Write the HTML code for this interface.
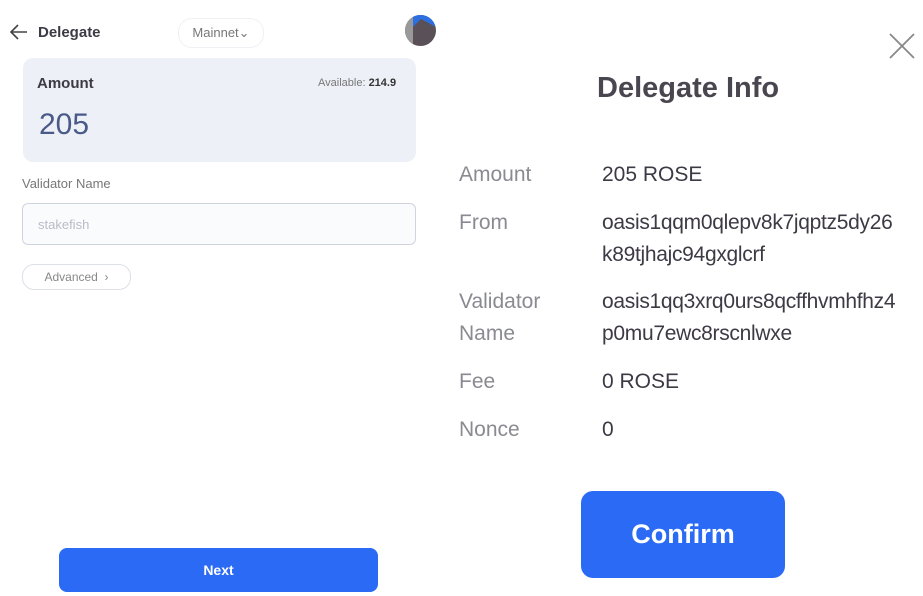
<!DOCTYPE html>
<html><head><meta charset="utf-8"><style>
body{margin:0;width:923px;height:596px;background:#fff;font-family:"Liberation Sans",sans-serif;position:relative;overflow:hidden;color:#3d3a45}
.a{position:absolute}
.lbl{color:#8a8a92;font-size:21px}
.val{color:#3d3a45;font-size:21px;line-height:32px}
</style></head><body>
<svg class="a" style="left:10px;top:24px" width="18" height="16" viewBox="0 0 18 16"><path d="M17 8H2M8 1L1 8l7 7" fill="none" stroke="#444" stroke-width="1.6"/></svg>
<div class="a" style="left:38px;top:24px;font-size:15px;font-weight:bold;color:#3d3a45">Delegate</div>
<div class="a" style="left:178px;top:18px;width:84px;height:28px;border-radius:14px;border:1px solid #f0f0f4;font-size:13px;color:#777;line-height:28px;text-align:center">Mainnet⌄</div>
<div class="a" style="left:405px;top:15px;width:31px;height:31px;border-radius:50%;background:#5a5057;overflow:hidden"><div class="a" style="left:0;top:0;width:8px;height:31px;background:#999"></div><svg class="a" style="left:0;top:0" width="31" height="31"><path d="M8 12L16 4L31 12V0H8Z" fill="#2c6fe0"/></svg></div>
<div class="a" style="left:23px;top:58px;width:393px;height:104px;border-radius:10px;background:#edf0f7"></div>
<div class="a" style="left:37px;top:75px;font-size:15px;font-weight:bold">Amount</div>
<div class="a" style="left:318px;top:77px;font-size:11px;color:#777">Available: <b style="color:#333">214.9</b></div>
<div class="a" style="left:39px;top:108px;font-size:30px;color:#4a5a88">205</div>
<div class="a" style="left:22px;top:176px;font-size:13px;color:#777">Validator Name</div>
<div class="a" style="left:22px;top:203px;width:392px;height:40px;border:1px solid #cfd4e0;border-radius:6px;background:#fafbfd"></div>
<div class="a" style="left:38px;top:217px;font-size:13px;color:#b8bcc6">stakefish</div>
<div class="a" style="left:22px;top:264px;width:107px;height:24px;border:1px solid #dde0e8;border-radius:12px;font-size:12px;color:#888;line-height:24px;text-align:center">Advanced &nbsp;›</div>
<div class="a" style="left:59px;top:548px;width:319px;height:44px;border-radius:8px;background:#2a6af5;color:#fff;font-size:14px;font-weight:bold;line-height:44px;text-align:center">Next</div>
<svg class="a" style="left:888px;top:32px" width="28" height="28"><path d="M2 2L26 26M26 2L2 26" stroke="#888" stroke-width="1.8"/></svg>
<div class="a" style="left:597px;top:72px;font-size:29px;font-weight:bold;color:#4a4650">Delegate Info</div>
<div class="a lbl" style="left:459px;top:163px">Amount</div>
<div class="a val" style="left:602px;top:159px">205 ROSE</div>
<div class="a lbl" style="left:459px;top:211px">From</div>
<div class="a val" style="left:602px;top:207px;letter-spacing:-0.3px">oasis1qqm0qlepv8k7jqptz5dy26<br>k89tjhajc94gxglcrf</div>
<div class="a lbl" style="left:459px;top:286px;line-height:32px">Validator<br>Name</div>
<div class="a val" style="left:602px;top:286px;letter-spacing:-0.3px">oasis1qq3xrq0urs8qcffhvmhfhz4<br>p0mu7ewc8rscnlwxe</div>
<div class="a lbl" style="left:459px;top:370px">Fee</div>
<div class="a val" style="left:602px;top:366px">0 ROSE</div>
<div class="a lbl" style="left:459px;top:418px">Nonce</div>
<div class="a val" style="left:602px;top:414px">0</div>
<div class="a" style="left:581px;top:491px;width:204px;height:87px;border-radius:12px;background:#2a6af5;color:#fff;font-size:27px;font-weight:bold;line-height:87px;text-align:center">Confirm</div>
</body></html>
